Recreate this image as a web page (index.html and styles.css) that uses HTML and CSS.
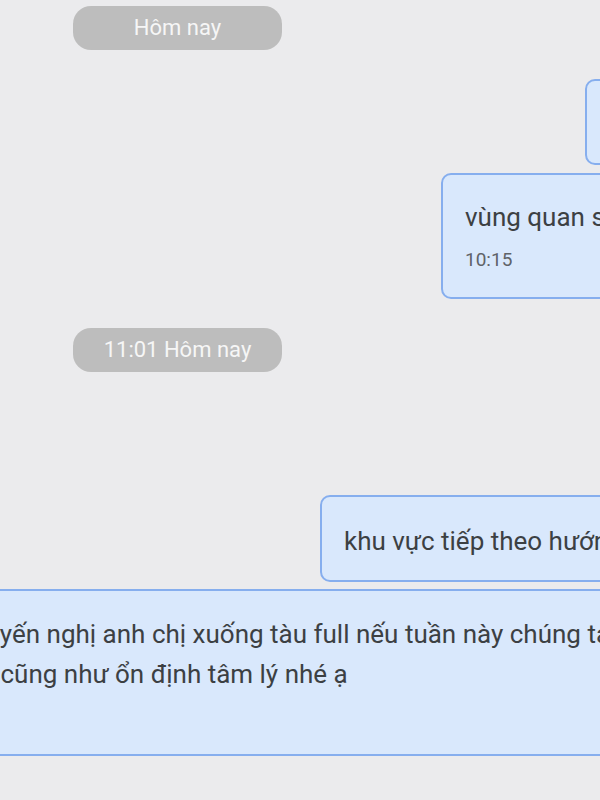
FILE: index.html
```html
<!DOCTYPE html>
<html lang="vi">
<head>
    <meta charset="UTF-8">
    <meta name="viewport" content="width=device-width, initial-scale=1.0">
    <title>Tin nhắn</title>
    <link rel="stylesheet" href="styles.css">
</head>
<body>

<div class="chat">
    <!-- Day separator -->
    <div class="day-pill">Hôm nay</div>

    <div class="bubble bubble-a">
        <p class="msg-text">tàu đang đi vào</p>
    </div>

    <div class="bubble bubble-b">
        <p class="msg-text">vùng quan sát sóng lớn</p>
        <span class="msg-time">10:15</span>
    </div>

    <div class="day-pill">11:01 Hôm nay</div>

    <div class="spacer"></div>

    <div class="bubble bubble-c">
        <p class="msg-text">khu vực tiếp theo hướng về cảng</p>
    </div>

    <!-- Long message, wider than the window -->
    <div class="bubble bubble-wide">
        <p class="msg-text">khuyến nghị anh chị xuống tàu full nếu tuần này chúng ta gặp sóng lớn để giữ thể<br>lực cũng như ổn định tâm lý nhé ạ</p>
    </div>
</div>

</body>
</html>
```

FILE: styles.css
```css
/* Base */
body {
    margin: 0;
    background-color: #ebebed;
    font-family: 'Roboto', 'Noto Sans', sans-serif;
    overflow: hidden;
    height: 800px;
}

.chat {
    display: flex;
    flex-direction: column;
    padding-top: 6px;
}

/* Grey day separator */
.day-pill {
    margin-left: 73px;
    width: 209px;
    height: 44px;
    line-height: 44px;
    border-radius: 18px;
    background-color: #bdbdbd;
    color: #f6f6f6;
    text-align: center;
    font-size: 22px;
    margin-bottom: 29px;
}

/* Message bubbles */
.bubble {
    box-sizing: border-box;
    background-color: #d9e8fc;
    border: 2px solid #86aeee;
    border-radius: 10px;
    padding: 0 22px;
    white-space: nowrap;
    color: #3c4043;
}

.msg-text {
    margin: 0;
    font-size: 26px;
    line-height: 40px;
}

.msg-time {
    display: block;
    font-size: 19px;
    color: #5f6368;
    line-height: 24px;
}

.bubble-a {
    align-self: flex-end;
    width: 200px;
    height: 86px;
    margin-right: -185px;
    padding-top: 22px;
}

.bubble-b {
    align-self: flex-end;
    width: 320px;
    height: 126px;
    margin-right: -161px;
    margin-top: 8px;
    margin-bottom: 29px;
    padding-top: 22px;
}

.bubble-b .msg-time {
    margin-top: 11px;
}

.spacer {
    height: 94px;
}

.bubble-c {
    align-self: flex-end;
    width: 440px;
    height: 87px;
    margin-right: -160px;
    padding-top: 24px;
}

.bubble-wide {
    width: 800px;
    height: 167px;
    margin-top: 7px;
    margin-left: -66px;
    padding-top: 23px;
    padding-left: 22px;
}
```
